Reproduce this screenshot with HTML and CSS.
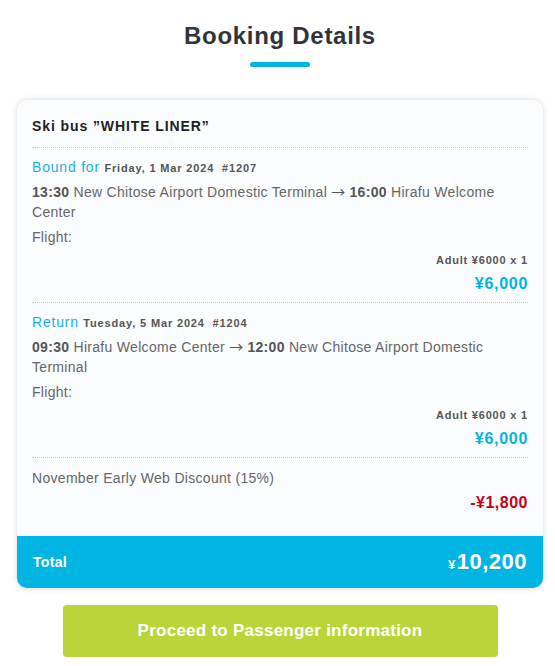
FILE: index.html
```html
<!DOCTYPE html>
<html lang="en">
<head>
<meta charset="utf-8">
<title>Booking Details</title>
<link rel="stylesheet" href="styles.css">
</head>
<body>
<main class="wrap">
  <h1 class="title">Booking Details</h1>
  <div class="title-bar"></div>

  <section class="card">
    <div class="card-body">
      <h2 class="product">Ski bus ”WHITE LINER”</h2>

      <div class="leg">
        <div class="leg-head"><span class="leg-type">Bound for</span> <span class="leg-date">Friday, 1 Mar 2024 &nbsp;#1207</span></div>
        <div class="route"><b>13:30</b> New Chitose Airport Domestic Terminal <span class="arrow">→</span> <b>16:00</b> Hirafu Welcome Center</div>
        <div class="flight">Flight:</div>
        <div class="fare">Adult ¥6000 x 1</div>
        <div class="amount">¥6,000</div>
      </div>

      <div class="leg">
        <div class="leg-head"><span class="leg-type">Return</span> <span class="leg-date">Tuesday, 5 Mar 2024 &nbsp;#1204</span></div>
        <div class="route"><b>09:30</b> Hirafu Welcome Center <span class="arrow">→</span> <b>12:00</b> New Chitose Airport Domestic Terminal</div>
        <div class="flight">Flight:</div>
        <div class="fare">Adult ¥6000 x 1</div>
        <div class="amount">¥6,000</div>
      </div>

      <div class="discount">
        <div class="discount-name">November Early Web Discount (15%)</div>
        <div class="discount-amount">-¥1,800</div>
      </div>
    </div>

    <div class="total">
      <span class="total-label">Total</span>
      <span class="total-value"><span class="yen">¥</span>10,200</span>
    </div>
  </section>

  <button class="proceed" type="button">Proceed to Passenger information</button>
</main>
</body>
</html>
```

FILE: styles.css
```css
* { box-sizing: border-box; }

html, body {
  margin: 0;
  padding: 0;
  background: #ffffff;
}

body {
  font-family: "Liberation Sans", Arial, sans-serif;
  color: #666666;
}

.wrap {
  width: 526px;
  margin: 0 12px 0 17px;
  display: flex;
  flex-direction: column;
  align-items: stretch;
}

.title {
  margin: 21px 0 0;
  font-size: 24px;
  line-height: 30px;
  font-weight: bold;
  text-align: center;
  letter-spacing: 0.7px;
  color: #30343a;
}

.title-bar {
  align-self: center;
  width: 60px;
  height: 5px;
  border-radius: 3px;
  background: #00b4e0;
  margin-top: 11px;
}

.card {
  margin-top: 33px;
  background: #fafcfe;
  border-radius: 10px;
  box-shadow: 0 0 6px rgba(0, 0, 0, 0.16);
  overflow: hidden;
}

.card-body {
  padding: 0 15px 0 15px;
}

.product {
  margin: 0;
  padding: 17px 0 12px;
  font-size: 14px;
  line-height: 18px;
  font-weight: bold;
  letter-spacing: 0.9px;
  color: #222222;
  border-bottom: 1px dotted #c8c8c8;
}

.leg {
  padding-bottom: 8px;
  border-bottom: 1px dotted #c8c8c8;
}

.leg-head {
  margin-top: 9px;
  line-height: 20px;
}

.leg-type {
  font-size: 14px;
  letter-spacing: 0.8px;
  color: #1aaee0;
}

.leg-date {
  font-size: 11px;
  font-weight: bold;
  letter-spacing: 0.85px;
  color: #555555;
}

.route {
  margin-top: 3px;
  font-size: 14px;
  line-height: 20px;
  letter-spacing: 0.3px;
  color: #666666;
}

.route b {
  color: #555555;
}

.arrow {
  font-family: "Noto Sans CJK JP", "DejaVu Sans", sans-serif;
  font-size: 14px;
  letter-spacing: 0;
  color: #555555;
}

.flight {
  margin-top: 5px;
  font-size: 14px;
  line-height: 20px;
  letter-spacing: 0.3px;
}

.fare {
  margin-top: 5px;
  font-size: 11px;
  line-height: 16px;
  font-weight: bold;
  letter-spacing: 0.8px;
  text-align: right;
  color: #555555;
}

.amount {
  margin-top: 6px;
  font-size: 16px;
  line-height: 20px;
  font-weight: bold;
  letter-spacing: 0.7px;
  text-align: right;
  color: #00b4e0;
}

.discount {
  padding-bottom: 23px;
}

.discount-name {
  margin-top: 10px;
  font-size: 14px;
  line-height: 20px;
  letter-spacing: 0.3px;
}

.discount-amount {
  margin-top: 5px;
  font-size: 16px;
  line-height: 20px;
  font-weight: bold;
  letter-spacing: 0.5px;
  text-align: right;
  color: #c4001d;
}

.total {
  height: 52px;
  padding: 0 16px 0 16px;
  background: #00b5e2;
  color: #ffffff;
  display: flex;
  align-items: center;
  justify-content: space-between;
}

.total-label {
  font-size: 14px;
  font-weight: bold;
  letter-spacing: 0.3px;
}

.total-value {
  font-size: 22px;
  font-weight: bold;
  letter-spacing: 0.5px;
}

.yen {
  font-size: 13px;
  margin-right: 1px;
}

.proceed {
  align-self: center;
  width: 435px;
  height: 52px;
  margin-top: 17px;
  border: none;
  border-radius: 4px;
  background: #bbd43a;
  color: #ffffff;
  font-family: "Liberation Sans", Arial, sans-serif;
  font-size: 17px;
  font-weight: bold;
  letter-spacing: 0.25px;
  box-shadow: 0 0 3px rgba(0, 0, 0, 0.08);
  cursor: pointer;
}
```
